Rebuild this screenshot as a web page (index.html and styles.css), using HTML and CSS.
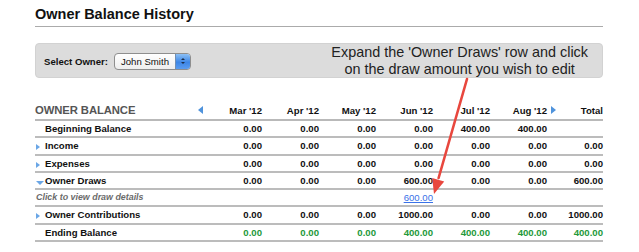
FILE: index.html
```html
<!DOCTYPE html>
<html>
<head>
<meta charset="utf-8">
<link rel="stylesheet" href="styles.css">
</head>
<body>
<div class="page">
  <h1 class="title">Owner Balance History</h1>
  <div class="toolbar">
    <div class="owner">
      <span class="owner-label">Select Owner:</span>
      <div class="select">
        <span class="select-text">John Smith</span>
        <span class="stepper"><i class="up"></i><i class="down"></i></span>
      </div>
    </div>
    <div class="note">Expand the 'Owner Draws' row and click<br>on the draw amount you wish to edit</div>
  </div>
  <table class="balance">
    <colgroup>
      <col class="c-label"><col class="c-m"><col class="c-m"><col class="c-m"><col class="c-m"><col class="c-m"><col class="c-m"><col class="c-total">
    </colgroup>
    <thead>
      <tr>
        <th class="label-head"><div class="head-flex"><span class="section">OWNER BALANCE</span><i class="tri-left"></i></div></th>
        <th>Mar '12</th><th>Apr '12</th><th>May '12</th><th>Jun '12</th><th>Jul '12</th><th>Aug '12</th>
        <th><div class="head-flex"><i class="tri-right"></i><span>Total</span></div></th>
      </tr>
    </thead>
    <tbody>
      <tr>
        <td class="label"><span class="slot"></span>Beginning Balance</td>
        <td>0.00</td><td>0.00</td><td>0.00</td><td>0.00</td><td>400.00</td><td>400.00</td><td></td>
      </tr>
      <tr>
        <td class="label"><span class="slot"><i class="tri-right"></i></span>Income</td>
        <td>0.00</td><td>0.00</td><td>0.00</td><td>0.00</td><td>0.00</td><td>0.00</td><td>0.00</td>
      </tr>
      <tr>
        <td class="label"><span class="slot"><i class="tri-right"></i></span>Expenses</td>
        <td>0.00</td><td>0.00</td><td>0.00</td><td>0.00</td><td>0.00</td><td>0.00</td><td>0.00</td>
      </tr>
      <tr>
        <td class="label"><span class="slot"><i class="tri-down"></i></span>Owner Draws</td>
        <td>0.00</td><td>0.00</td><td>0.00</td><td>600.00</td><td>0.00</td><td>0.00</td><td>600.00</td>
      </tr>
      <tr class="detail">
        <td class="hint">Click to view draw details</td>
        <td></td><td></td><td></td><td><a class="draw-link" href="#">600.00</a></td><td></td><td></td><td></td>
      </tr>
      <tr>
        <td class="label"><span class="slot"><i class="tri-right"></i></span>Owner Contributions</td>
        <td>0.00</td><td>0.00</td><td>0.00</td><td>1000.00</td><td>0.00</td><td>0.00</td><td>1000.00</td>
      </tr>
      <tr class="ending">
        <td class="label"><span class="slot"></span>Ending Balance</td>
        <td>0.00</td><td>0.00</td><td>0.00</td><td>400.00</td><td>400.00</td><td>400.00</td><td>400.00</td>
      </tr>
    </tbody>
  </table>
  <svg class="callout" width="639" height="252" viewBox="0 0 639 252">
    <line x1="467" y1="79" x2="438.6" y2="178" stroke="#e8473e" stroke-width="2.6" stroke-linecap="round"/>
    <polygon points="434,194 444.2,181.5 432.2,178" fill="#e8473e"/>
  </svg>
</div>
</body>
</html>
```

FILE: styles.css
```css
html, body {
  margin: 0;
  padding: 0;
  background: #ffffff;
}

.page {
  position: relative;
  width: 639px;
  height: 252px;
  padding: 5px 36px 0 35px;
  box-sizing: border-box;
  font-family: "Liberation Sans", Arial, sans-serif;
  color: #111;
  overflow: hidden;
}

.title {
  margin: 0;
  font-size: 14.5px;
  line-height: 18px;
  font-weight: bold;
  color: #111;
  padding-bottom: 3px;
  border-bottom: 1px solid #ababab;
}

.toolbar {
  margin-top: 16px;
  height: 35px;
  box-sizing: border-box;
  background: #dcdcdc;
  border: 1px solid #d2d2d2;
  border-radius: 4px;
  display: flex;
  align-items: center;
  justify-content: space-between;
  padding: 0 14px 0 8px;
}

.owner {
  display: flex;
  align-items: center;
  gap: 6px;
  margin-top: 1px;
}

.owner-label {
  font-size: 9.6px;
  font-weight: bold;
  color: #111;
}

.select {
  display: flex;
  align-items: stretch;
  width: 77px;
  height: 17px;
  box-sizing: border-box;
  border: 1px solid #8e8e8e;
  border-radius: 4px;
  background: linear-gradient(#ffffff, #eeeeee);
  overflow: hidden;
}

.select-text {
  flex: 1;
  font-size: 9.6px;
  line-height: 15px;
  padding-left: 6px;
  color: #111;
}

.stepper {
  width: 14px;
  background: linear-gradient(#8cc0f5, #3d86e6 55%, #5a9cf0);
  border-left: 1px solid #6f8fb5;
  display: flex;
  flex-direction: column;
  align-items: center;
  justify-content: center;
  gap: 2px;
}

.stepper .up {
  width: 0;
  height: 0;
  border-left: 2px solid transparent;
  border-right: 2px solid transparent;
  border-bottom: 2.5px solid #1c2e4a;
}

.stepper .down {
  width: 0;
  height: 0;
  border-left: 2px solid transparent;
  border-right: 2px solid transparent;
  border-top: 2.5px solid #1c2e4a;
}

.note {
  font-size: 14.4px;
  line-height: 17.5px;
  text-align: center;
  color: #222;
  margin-top: 1px;
}

.balance {
  margin-top: 24px;
  width: 568px;
  table-layout: fixed;
  border-collapse: separate;
  border-spacing: 0;
}

.c-label { width: 170px; }
.c-m { width: 57px; }
.c-total { width: 56px; }

.balance th {
  font-size: 9.6px;
  font-weight: bold;
  line-height: 17px;
  text-align: right;
  padding: 0;
  color: #111;
  border-bottom: 2px solid #b9b9b9;
  white-space: nowrap;
}

.balance th.label-head {
  text-align: left;
}

.head-flex {
  display: flex;
  align-items: center;
  justify-content: space-between;
}

.section {
  font-size: 11.3px;
  color: #555;
  letter-spacing: -0.1px;
}

.tri-left {
  display: inline-block;
  width: 0;
  height: 0;
  border-top: 4px solid transparent;
  border-bottom: 4px solid transparent;
  border-right: 5px solid #4f93dc;
  margin-right: 2px;
  margin-top: -1px;
}

.tri-right {
  display: inline-block;
  width: 0;
  height: 0;
  border-top: 3.5px solid transparent;
  border-bottom: 3.5px solid transparent;
  border-left: 4px solid #6aa6e6;
}

.head-flex .tri-right {
  margin-left: 4px;
  margin-top: -1px;
  border-top-width: 4px;
  border-bottom-width: 4px;
  border-left-width: 5px;
  border-left-color: #4f93dc;
}

.tri-down {
  display: inline-block;
  width: 0;
  height: 0;
  border-left: 4px solid transparent;
  border-right: 4px solid transparent;
  border-top: 4px solid #6aa6e6;
  margin-left: 1px;
}

.balance td {
  font-size: 9.6px;
  font-weight: bold;
  line-height: 15.3px;
  padding: 0;
  text-align: right;
  color: #111;
  border-bottom: 2px solid #bcbcbc;
  white-space: nowrap;
}

.balance td.label {
  text-align: left;
}

.slot {
  display: inline-flex;
  align-items: center;
  width: 10px;
  height: 8px;
  vertical-align: -1px;
}

.slot .tri-right {
  margin-left: 1px;
}

.balance td.hint {
  text-align: left;
  font-style: italic;
  font-size: 8.9px;
  color: #6b6b6b;
  padding-left: 1px;
}

.draw-link {
  font-weight: normal;
  color: #3a72e8;
  text-decoration: underline;
}

.ending td:not(.label) {
  color: #23993a;
}

.callout {
  position: absolute;
  left: 0;
  top: 0;
  pointer-events: none;
}
```
